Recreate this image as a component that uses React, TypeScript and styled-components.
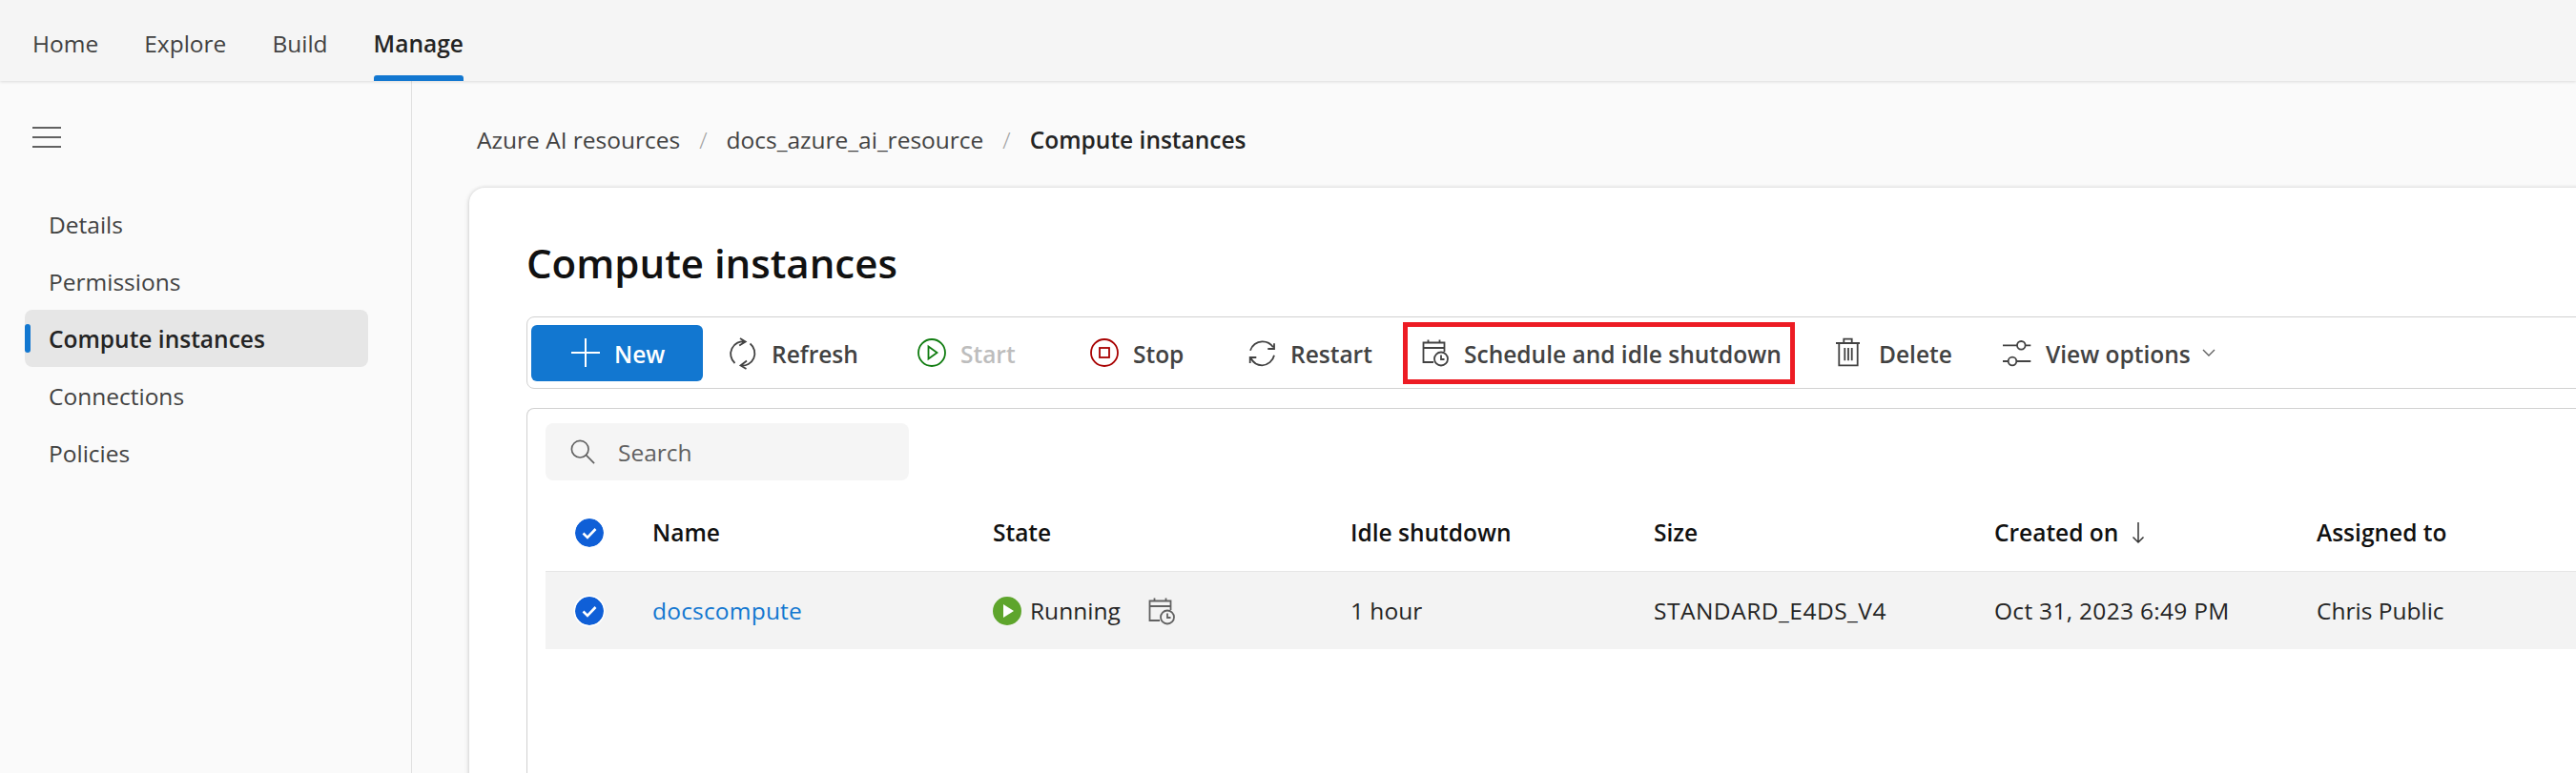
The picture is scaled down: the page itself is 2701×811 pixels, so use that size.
import React from 'react';
import styled, { createGlobalStyle } from 'styled-components';

const Global = createGlobalStyle`
html, body {
    margin: 0;
    padding: 0;
    background: #fafafa;
}
* {
    box-sizing: border-box;
}
body {
    font-family: "Open Sans", "Noto Sans", "Liberation Sans", sans-serif;
    font-size: 24.5px;
    color: #242424;
}
`

const Page = styled.div`
width: 2701px;
height: 811px;
display: flex;
flex-direction: column;
overflow: hidden;
`
const TopNav = styled.nav`
height: 85px;
flex: none;
display: flex;
gap: 48px;
padding-left: 34px;
background: #f5f5f5;
box-shadow: 0 1px 3px rgba(0, 0, 0, 0.12);
position: relative;
z-index: 1;
`
const NavItem = styled.a<{ $active?: boolean }>`
position: relative;
display: flex;
align-items: center;
padding-top: 5px;
color: ${(p) => (p.$active ? '#242424' : '#424242')};
font-weight: ${(p) => (p.$active ? 600 : 400)};
&::after {
    content: '';
    display: ${(p) => (p.$active ? 'block' : 'none')};
    position: absolute;
    left: 0;
    right: 0;
    bottom: 0;
    height: 6px;
    border-radius: 3px 3px 0 0;
    background: #1277d0;
}
`
const Body = styled.div`
flex: 1;
display: flex;
min-height: 0;
`
const Sidebar = styled.aside`
width: 432px;
flex: none;
padding: 48px 0 0 26px;
border-right: 1px solid #e0e0e0;
`
const Burger = styled.button`
display: block;
width: 30px;
height: 22px;
margin: 0 0 50px 8px;
padding: 0;
border: 0;
background: none;
`
const SideItem = styled.a<{ $active?: boolean }>`
position: relative;
display: flex;
align-items: center;
width: 360px;
height: 60px;
padding: 1px 0 0 25px;
border-radius: 8px;
color: ${(p) => (p.$active ? '#242424' : '#424242')};
background: ${(p) => (p.$active ? '#e6e6e6' : 'transparent')};
font-weight: ${(p) => (p.$active ? 600 : 400)};
&::before {
    content: '';
    display: ${(p) => (p.$active ? 'block' : 'none')};
    position: absolute;
    left: 0;
    top: 15px;
    width: 6px;
    height: 30px;
    border-radius: 3px;
    background: #1277d0;
}
`
const Main = styled.main`
flex: 1;
min-width: 0;
padding: 0 0 0 60px;
overflow: hidden;
`
const Crumbs = styled.div`
height: 112px;
display: flex;
align-items: center;
padding: 10px 0 0 8px;
color: #424242;
`
const Slash = styled.span`
margin: 0 20px;
color: #a0a0a0;
font-weight: 300;
`
const CrumbNow = styled.span`
color: #242424;
font-weight: 600;
`
const Card = styled.section`
width: 2400px;
height: 800px;
padding: 49px 0 0 60px;
background: #fff;
border-radius: 16px;
box-shadow: 0 0 4px rgba(0, 0, 0, 0.14), 0 2px 6px rgba(0, 0, 0, 0.1);
`
const Title = styled.h1`
margin: 0 0 27px;
height: 59px;
font-size: 42px;
line-height: 59px;
font-weight: 600;
color: #111;
`
const Toolbar = styled.div`
display: flex;
align-items: center;
height: 76px;
padding-left: 4px;
border: 1px solid #d1d1d1;
border-radius: 8px;
`
const NewButton = styled.button`
display: flex;
align-items: center;
gap: 15px;
width: 180px;
height: 59px;
margin-right: 27px;
padding: 0 0 0 42px;
border: 0;
border-radius: 6px;
background: #1277d0;
color: #fff;
font: inherit;
font-weight: 600;
`
const ToolButton = styled.button<{ $width: number; $disabled?: boolean; $marked?: boolean }>`
display: flex;
align-items: center;
gap: 15px;
width: ${(p) => p.$width}px;
height: 65px;
margin-right: ${(p) => (p.$marked ? 43 : 0)}px;
padding: 0 0 0 ${(p) => (p.$marked ? 14 : 0)}px;
border: ${(p) => (p.$marked ? '5px solid #ed1c24' : '0')};
background: none;
color: ${(p) => (p.$disabled ? '#bdbdbd' : '#424242')};
font: inherit;
font-weight: 600;
white-space: nowrap;
`
const ToolLabel = styled.span`
padding-top: 3px;
`
const Chevron = styled.svg`
margin-left: -3px;
`
const IconSvg = styled.svg`
flex: none;
overflow: visible;
`
const TableBox = styled.div`
margin-top: 20px;
height: 500px;
padding: 15px 0 0 19px;
border: 1px solid #d1d1d1;
border-bottom: 0;
border-radius: 8px 0 0 0;
`
const Search = styled.div`
display: flex;
align-items: center;
gap: 24px;
width: 381px;
height: 60px;
padding-left: 26px;
background: #f5f5f5;
border-radius: 8px;
color: #616161;
`
const Row = styled.div<{ $selected?: boolean }>`
display: grid;
grid-template-columns: 112px 357px 375px 318px 357px 338px 1fr;
align-items: center;
background: ${(p) => (p.$selected ? '#f3f3f3' : 'transparent')};
border-top: ${(p) => (p.$selected ? '1px solid #e6e6e6' : '0')};
height: ${(p) => (p.$selected ? 82 : 95)}px;
padding-top: ${(p) => (p.$selected ? 0 : 14)}px;
`
const Head = styled.span`
display: flex;
align-items: center;
gap: 14px;
font-weight: 600;
color: #111;
white-space: nowrap;
`
const Cell = styled.span<{ $tracking?: number }>`
display: flex;
align-items: center;
white-space: nowrap;
color: #242424;
letter-spacing: ${(p) => p.$tracking ?? 0}px;
`
const CheckCell = styled.span`
display: flex;
padding-left: 31px;
`
const CheckMark = styled.svg<{ $ring?: boolean }>`
border-radius: 50%;
box-shadow: ${(p) => (p.$ring ? '0 0 0 1.5px #fff' : 'none')};
`
const NameLink = styled.a`
color: #1277d0;
letter-spacing: 0.2px;
`
const RunDot = styled.svg`
flex: none;
margin-right: 9px;
`
const ScheduleFlag = styled.span`
display: flex;
margin-left: 28px;
color: #616161;
`

function Ico({ s = 30, children }: { s?: number; children: React.ReactNode }) {
    return (
        <IconSvg width={s} height={s} viewBox={`0 0 ${s} ${s}`} fill="none" stroke="currentColor" strokeWidth="1.8">
            {children}
        </IconSvg>
    )
}

const Check = ({ ring }: { ring?: boolean }) => (
    <CheckMark $ring={ring} width="30" height="30" viewBox="0 0 30 30">
        <circle cx="15" cy="15" r="15" fill="#0f5fd7" />
        <path d="M8.5 15.5l4.5 4.5 8.5-9" fill="none" stroke="#fff" strokeWidth="2.6" />
    </CheckMark>
)
const CalendarClock = ({ bg }: { bg: string }) => (
    <Ico>
        <path d="M13 25H2.500V4.500h22V14M2.500 10h22M7.500 1.500v4M19.500 1.500v4" />
        <circle cx="21" cy="21.500" r="7" fill={bg} />
        <path d="M21 17.500v4.500h3.500" />
    </Ico>
)

const columns = ['Name', 'State', 'Idle shutdown', 'Size']

export default function App() {
    return (
        <Page>
            <Global />
            <TopNav>
                <NavItem>Home</NavItem>
                <NavItem>Explore</NavItem>
                <NavItem>Build</NavItem>
                <NavItem $active>Manage</NavItem>
            </TopNav>
            <Body>
                <Sidebar>
                    <Burger aria-label="menu">
                        <svg width="30" height="22" viewBox="0 0 30 22" stroke="#616161" strokeWidth="2">
                            <path d="M0 1h30M0 11h30M0 21h30" />
                        </svg>
                    </Burger>
                    <SideItem>Details</SideItem>
                    <SideItem>Permissions</SideItem>
                    <SideItem $active>Compute instances</SideItem>
                    <SideItem>Connections</SideItem>
                    <SideItem>Policies</SideItem>
                </Sidebar>
                <Main>
                    <Crumbs>
                        <span>Azure AI resources</span>
                        <Slash>/</Slash>
                        <span>docs_azure_ai_resource</span>
                        <Slash>/</Slash>
                        <CrumbNow>Compute instances</CrumbNow>
                    </Crumbs>
                    <Card>
                        <Title>Compute instances</Title>
                        <Toolbar>
                            <NewButton>
                                <svg width="30" height="30" viewBox="0 0 30 30" stroke="#fff" strokeWidth="2">
                                    <path d="M15 0v30M0 15h30" />
                                </svg>
                                <ToolLabel>New</ToolLabel>
                            </NewButton>
                            <ToolButton $width={198}>
                                <Ico>
                                    <path d="M6.500 26A13 13 0 0 1 17.500 3.500M12 0l5.700 3.500-6.500 4" />
                                    <path d="M22.500 5.500A13 13 0 0 1 12.500 28.500M19 23.500l-6.500 5 6 3.500" />
                                </Ico>
                                <ToolLabel>Refresh</ToolLabel>
                            </ToolButton>
                            <ToolButton $width={181} $disabled>
                                <Ico>
                                    <circle cx="15" cy="15" r="14" stroke="#107c10" />
                                    <path d="M11.500 8.500L20.500 15l-9 6.500z" stroke="#107c10" />
                                </Ico>
                                <ToolLabel>Start</ToolLabel>
                            </ToolButton>
                            <ToolButton $width={167}>
                                <Ico>
                                    <circle cx="15" cy="15" r="14" stroke="#a80000" />
                                    <rect x="10" y="10" width="10" height="10" stroke="#a80000" />
                                </Ico>
                                <ToolLabel>Stop</ToolLabel>
                            </ToolButton>
                            <ToolButton $width={161}>
                                <Ico s={28}>
                                    <path d="M1 11.700A13.500 13.500 0 0 1 13.300 2.300 13.500 13.500 0 0 1 25 8.300M26 4.300V10H19.300" />
                                    <path d="M26 16.700A13.500 13.500 0 0 1 13.300 27.300 13.500 13.500 0 0 1 1.700 20M.7 25V19H7.300" />
                                </Ico>
                                <ToolLabel>Restart</ToolLabel>
                            </ToolButton>
                            <ToolButton $width={411} $marked>
                                <CalendarClock bg="#fff" />
                                <ToolLabel>Schedule and idle shutdown</ToolLabel>
                            </ToolButton>
                            <ToolButton $width={175}>
                                <Ico>
                                    <path d="M0 5h25M3.300 5v23.300h19.400V5M8.300 5V.7h8.400V5" />
                                    <path d="M9.300 10v13.300M13 10v13.300M16.700 10v13.300" />
                                </Ico>
                                <ToolLabel>Delete</ToolLabel>
                            </ToolButton>
                            <ToolButton $width={260}>
                                <Ico>
                                    <path d="M0 7.300h29.300M0 24h29.300" />
                                    <circle cx="19.300" cy="7.300" r="4.300" fill="#fff" />
                                    <circle cx="10" cy="24" r="4.300" fill="#fff" />
                                </Ico>
                                <ToolLabel>View options</ToolLabel>
                                <Chevron width="14" height="10" viewBox="0 0 14 10" fill="none" stroke="#616161" strokeWidth="1.400">
                                    <path d="M1 2l6 6 6-6" />
                                </Chevron>
                            </ToolButton>
                        </Toolbar>
                        <TableBox>
                            <Search>
                                <svg width="26" height="26" viewBox="0 0 28 28" fill="none" stroke="#616161" strokeWidth="1.800">
                                    <circle cx="11" cy="11" r="9.500" />
                                    <path d="M18 18l9 9" />
                                </svg>
                                Search
                            </Search>
                            <Row>
                                <CheckCell><Check /></CheckCell>
                                {columns.map((c) => <Head key={c}>{c}</Head>)}
                                <Head>
                                    Created on
                                    <svg width="14" height="24" viewBox="0 0 14 24" fill="none" stroke="#333" strokeWidth="1.500">
                                        <path d="M7 1v21M1.500 16.500L7 22l5.500-5.500" />
                                    </svg>
                                </Head>
                                <Head>Assigned to</Head>
                            </Row>
                            <Row $selected>
                                <CheckCell><Check ring /></CheckCell>
                                <NameLink>docscompute</NameLink>
                                <Cell>
                                    <RunDot width="30" height="30" viewBox="0 0 30 30">
                                        <circle cx="15" cy="15" r="15" fill="#5ea52c" />
                                        <path d="M11 8l11 7-11 7z" fill="#fff" />
                                    </RunDot>
                                    Running
                                    <ScheduleFlag><CalendarClock bg="#f3f3f3" /></ScheduleFlag>
                                </Cell>
                                <Cell>1 hour</Cell>
                                <Cell $tracking={0.5}>STANDARD_E4DS_V4</Cell>
                                <Cell $tracking={0.3}>Oct 31, 2023 6:49 PM</Cell>
                                <Cell>Chris Public</Cell>
                            </Row>
                        </TableBox>
                    </Card>
                </Main>
            </Body>
        </Page>
    )
}
